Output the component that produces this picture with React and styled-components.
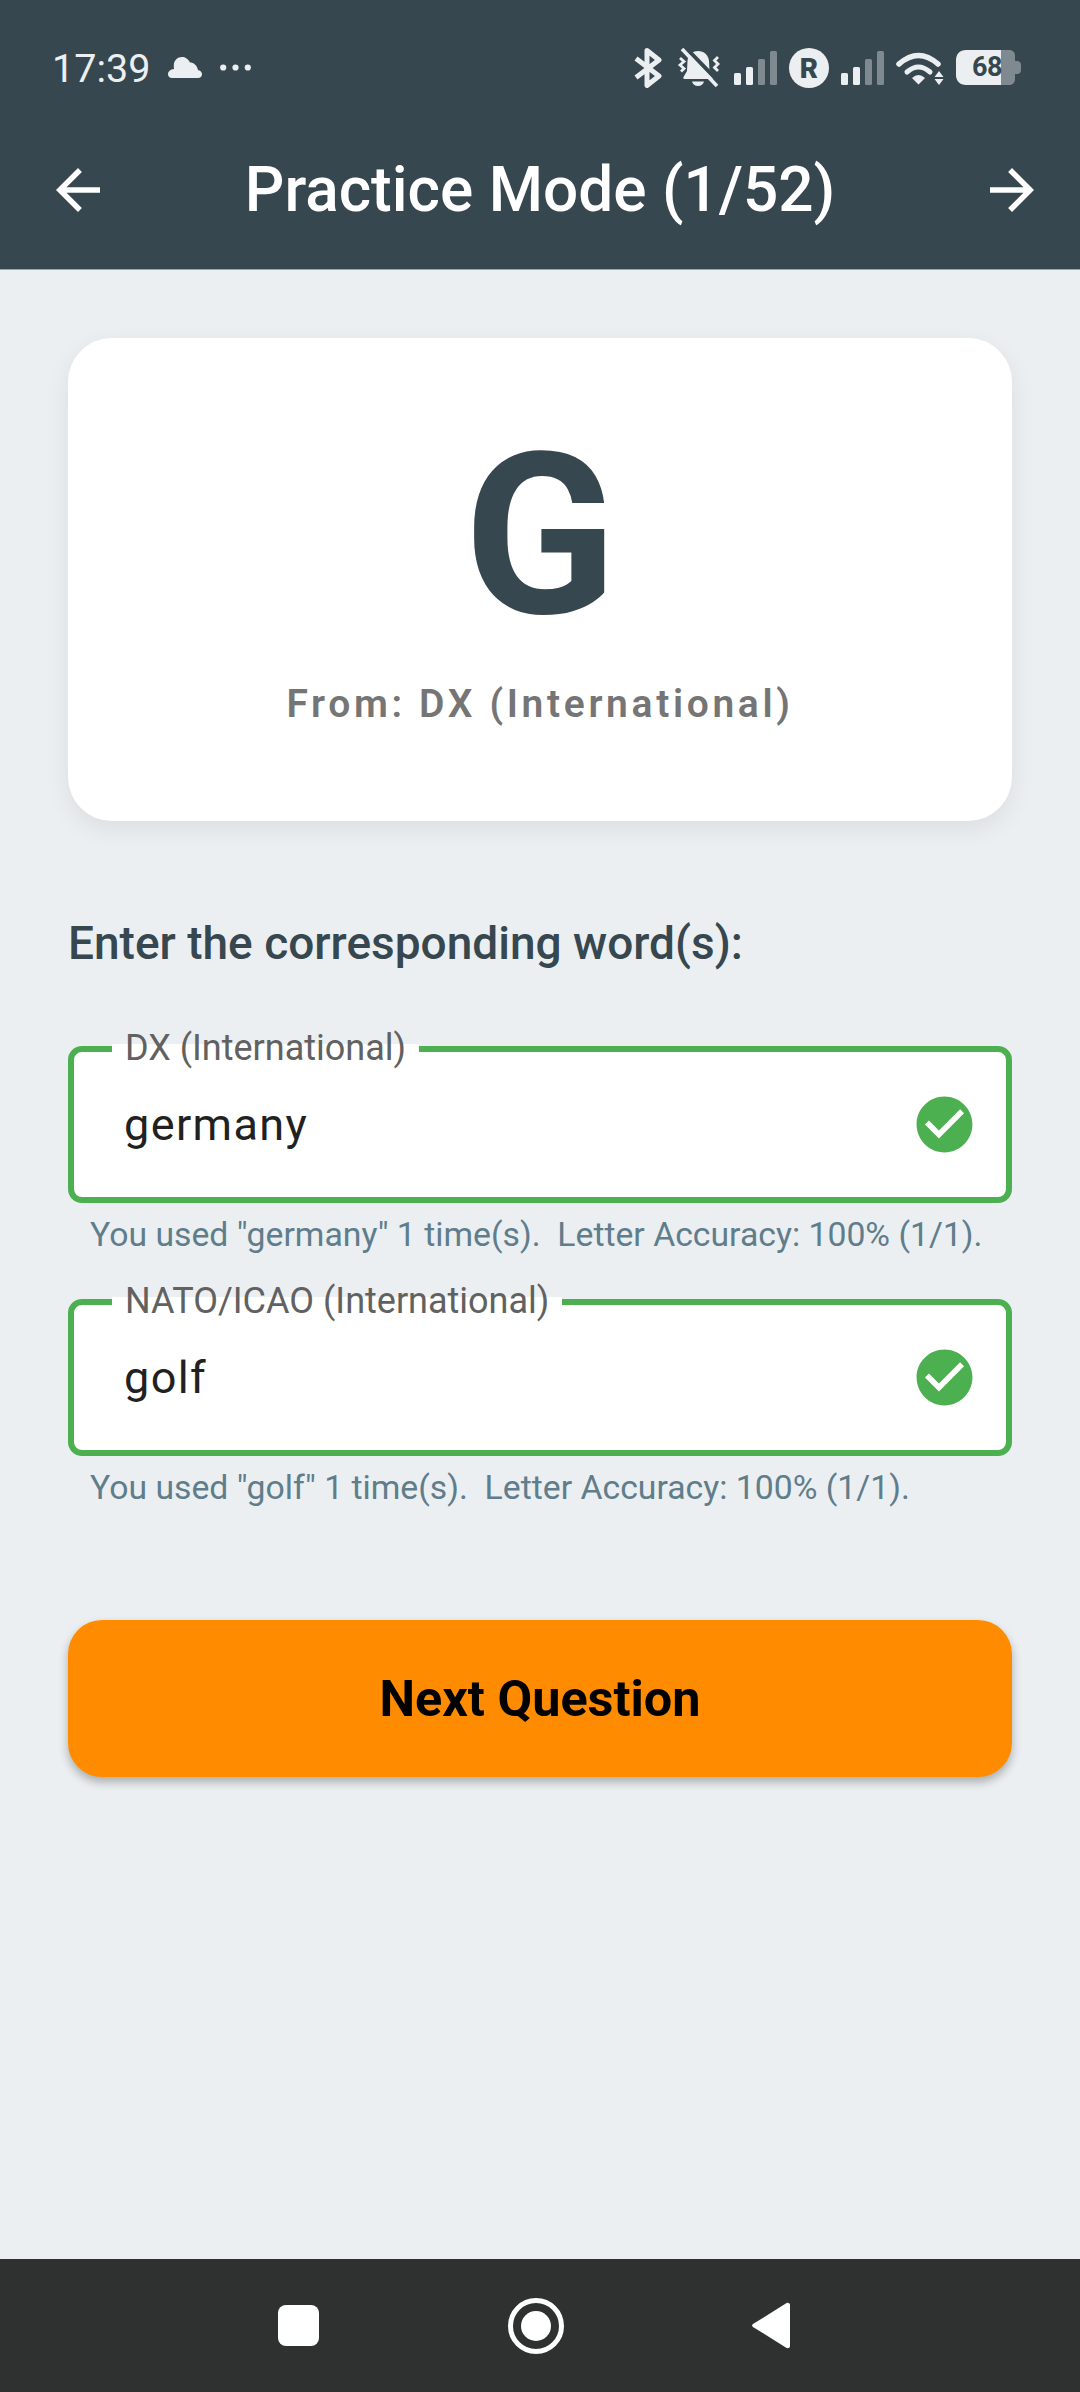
import React from 'react';
import styled, { createGlobalStyle } from 'styled-components';

const GlobalStyle = createGlobalStyle`
  html, body {
    margin: 0;
    padding: 0;
    background: #ebeff1;
  }
  * {
    box-sizing: border-box;
  }
`;

const Page = styled.div`
  width: 1080px;
  height: 2392px;
  display: flex;
  flex-direction: column;
  background: #ebeff1;
  font-family: Roboto, "Liberation Sans", sans-serif;
  overflow: hidden;
`;

const Header = styled.header`
  height: 270px;
  flex-shrink: 0;
  background: #37474f;
  border-bottom: 1px solid #9aa5aa;
`;

const StatusBar = styled.div`
  height: 135px;
  display: flex;
  align-items: center;
  justify-content: space-between;
  padding: 0 59px 0 52px;
  color: #eceff1;
`;

const StatusLeft = styled.div`
  display: flex;
  align-items: center;
  gap: 18px;
`;

const StatusTime = styled.span`
  margin-top: 3px;
  font-size: 39.5px;
  line-height: 44px;
`;

const StatusRight = styled.div`
  display: flex;
  align-items: center;
  gap: 12px;
`;

const StatusIcon = styled.svg`
  display: block;
  flex-shrink: 0;
`;

const Battery = styled.div`
  position: relative;
  width: 65px;
  height: 35px;
`;

const BatteryLevel = styled.span`
  position: absolute;
  left: 0;
  top: 0;
  width: 100%;
  height: 100%;
  text-align: center;
  padding-right: 3px;
  font-size: 27px;
  line-height: 35px;
  font-weight: 700;
  letter-spacing: -0.5px;
  color: #37474f;
`;

const AppBar = styled.div`
  height: 134px;
  display: flex;
  align-items: center;
  justify-content: space-between;
  padding: 0 35px 24px 45px;
`;

const Title = styled.h1`
  margin: 0 10px 0 0;
  color: #fff;
  font-size: 62.1px;
  line-height: 70px;
  font-weight: 500;
`;

const NavArrow = styled.svg`
  display: block;
  width: 66px;
  height: 66px;
  fill: #fff;
`;

const Main = styled.main`
  flex: 1;
  padding: 68px 68px 0;
  display: flex;
  flex-direction: column;
`;

const Card = styled.section`
  height: 483px;
  background: #fff;
  border-radius: 44px;
  box-shadow: 0 8px 24px rgba(0, 0, 0, 0.07);
  display: flex;
  flex-direction: column;
  align-items: center;
`;

const Letter = styled.div`
  margin-top: 84px;
  font-size: 224px;
  line-height: 230px;
  font-weight: 700;
  color: #37474f;
`;

const Source = styled.div`
  margin-top: 30px;
  font-size: 39px;
  line-height: 44px;
  font-weight: 600;
  letter-spacing: 3.66px;
  color: #757575;
`;

const Prompt = styled.h2`
  margin: 97px 0 0;
  font-size: 46px;
  line-height: 50px;
  font-weight: 500;
  color: #37474f;
`;

const Field = styled.div`
  position: relative;
  flex-shrink: 0;
  margin-top: ${(props) => props.$top}px;
  height: 157px;
  display: flex;
  align-items: center;
  justify-content: space-between;
  padding: 0 28px 0 50px;
  background: #fff;
  border: 6px solid #4caf50;
  border-radius: 14px;
`;

const FieldLabel = styled.label`
  position: absolute;
  left: 38px;
  top: -24px;
  padding: 0 13px;
  font-size: 36px;
  line-height: 40px;
  color: #616161;
  background: linear-gradient(#ebeff1 40%, #fff 40%);
`;

const FieldValue = styled.span`
  font-size: 45px;
  line-height: 54px;
  letter-spacing: 1.4px;
  color: #212121;
`;

const CheckIcon = styled.svg`
  display: block;
  width: 67px;
  height: 67px;
  fill: #4caf50;
`;

const Helper = styled.p`
  margin: 11.5px 0 0 22px;
  font-size: 33.75px;
  line-height: 40px;
  white-space: pre;
  color: #607d8b;
`;

const NextButton = styled.button`
  flex-shrink: 0;
  margin-top: 112.5px;
  height: 157px;
  border: none;
  border-radius: 34px;
  background: #ff8c00;
  box-shadow: 0 5px 10px rgba(0, 0, 0, 0.28);
  color: #000;
  font-family: inherit;
  font-size: 50.4px;
  font-weight: 700;
`;

const SystemNav = styled.nav`
  height: 133px;
  flex-shrink: 0;
  background: #2f3130;
  display: flex;
  align-items: center;
  padding-left: 278px;
`;

const RecentsKey = styled.div`
  width: 41px;
  height: 41px;
  background: #fff;
  border-radius: 8px;
`;

const HomeKey = styled.div`
  margin-left: 189px;
  width: 56px;
  height: 56px;
  border-radius: 50%;
  border: 5px solid #fff;
  display: flex;
  align-items: center;
  justify-content: center;
`;

const HomeDot = styled.div`
  width: 30px;
  height: 30px;
  border-radius: 50%;
  background: #fff;
`;

const BackKey = styled.svg`
  margin-left: 188px;
  display: block;
  width: 38px;
  height: 47px;
  fill: #fff;
`;

const ARROW_BACK = 'M20 11H7.83l5.59-5.59L12 4l-8 8 8 8 1.41-1.41L7.83 13H20v-2z';
const ARROW_FORWARD = 'M12 4l-1.41 1.41L16.17 11H4v2h12.17l-5.58 5.59L12 20l8-8z';
const CHECK_CIRCLE = 'M12 2C6.48 2 2 6.48 2 12s4.48 10 10 10 10-4.48 10-10S17.52 2 12 2zm-2 15l-5-5 1.41-1.41L10 14.17l7.59-7.59L19 8l-9 9z';

const Cloud = () => (
  <StatusIcon width="34" height="21" viewBox="0 0 34 21">
    <path fill="#eceff1" d="M4 21h26c2.400 0 4-1.700 4-3.800 0-2.200-1.600-3.900-3.900-4C29 8 25.400 5.500 22 5.500 20.500 2 17 0 14 0 9.500 0 6 3.500 5.800 8 5.700 9.500 5.800 10.500 6 12 2.500 12.200 0 14.500 0 17.200 0 19.500 1.700 21 4 21z" />
  </StatusIcon>
);

const Dots = () => (
  <StatusIcon width="31" height="7" viewBox="0 0 31 7">
    <circle cx="3.200" cy="3.500" r="3.100" fill="#eceff1" />
    <circle cx="15.500" cy="3.500" r="3.100" fill="#eceff1" />
    <circle cx="27.800" cy="3.500" r="3.100" fill="#eceff1" />
  </StatusIcon>
);

const Bluetooth = () => (
  <StatusIcon width="29" height="40" viewBox="0 0 29 40">
    <path fill="none" stroke="#eceff1" strokeWidth="5" strokeLinejoin="round" d="M2 10.500 25 28 13 37.500V2.500L25 12 2 29.500" />
  </StatusIcon>
);

const BellMuted = () => (
  <StatusIcon width="47" height="40" viewBox="0 0 47 40">
    <path fill="#eceff1" d="M23 3c6 0 10.500 4 11 10l.5 10 3.500 6c.5 1-.2 2-1.200 2H9.500c-1 0-1.500-1-1-2L12 23l.5-10C13 7 17 3 23 3zM17 33.500h12c-.5 2.700-3 4.500-6 4.500s-5.500-1.800-6-4.500z" />
    <path fill="none" stroke="#37474f" strokeWidth="4" d="M10 -1 46 36" />
    <path fill="none" stroke="#eceff1" strokeWidth="3.600" d="M7 1 42 38" />
    <path fill="none" stroke="#eceff1" strokeWidth="2.800" d="M5 10l4 3.500-4 3.500 4 3.500-3 3M43 9l-3.500 3.500L43 16l-3.500 3.500L43 23" />
  </StatusIcon>
);

const Signal = () => (
  <StatusIcon width="43" height="34" viewBox="0 0 43 34">
    <rect x="0" y="22" width="7" height="12" rx="1.500" fill="#eceff1" />
    <rect x="12" y="16" width="7" height="18" rx="1.500" fill="#eceff1" />
    <rect x="24" y="8" width="7" height="26" rx="1.500" fill="#7f8a90" />
    <rect x="36" y="0" width="7" height="34" rx="1.500" fill="#7f8a90" />
  </StatusIcon>
);

const RoamingBadge = () => (
  <StatusIcon width="40" height="40" viewBox="0 0 40 40">
    <circle cx="20" cy="20" r="20" fill="#eceff1" />
    <text x="20" y="30" textAnchor="middle" fontFamily="Roboto, sans-serif" fontSize="28" fontWeight="900" fill="#37474f">R</text>
  </StatusIcon>
);

const Wifi = () => (
  <StatusIcon width="48" height="34" viewBox="0 0 48 34">
    <path fill="none" stroke="#eceff1" strokeWidth="5.500" strokeLinecap="round" d="M3 13Q22.500 -4 42 13" />
    <path fill="none" stroke="#eceff1" strokeWidth="5" strokeLinecap="round" d="M11 21Q22.500 11 34 21" />
    <path fill="#eceff1" d="M16 27Q22.500 21 29 27L22.500 33.500zM43 20l4.500 6h-9zM38.500 28h9L43 34z" />
  </StatusIcon>
);

const BatteryIcon = () => (
  <Battery>
    <StatusIcon width="65" height="35" viewBox="0 0 65 35">
      <path fill="#7f8a90" d="M40 0h13c4 0 6 2.500 6 6v5h2c2.500 0 4 1.500 4 4v5c0 2.500-1.500 4-4 4h-2v5c0 3.500-2 6-6 6H40z" />
      <path fill="#eceff1" d="M10 0h35v35H10C4 35 0 31 0 25V10C0 4 4 0 10 0z" />
    </StatusIcon>
    <BatteryLevel>68</BatteryLevel>
  </Battery>
);

const AnswerField = ({ label, value, top }) => (
  <Field $top={top}>
    <FieldLabel>{label}</FieldLabel>
    <FieldValue>{value}</FieldValue>
    <CheckIcon viewBox="0 0 24 24">
      <path d={CHECK_CIRCLE} />
    </CheckIcon>
  </Field>
);

const App = () => {
  return (
    <Page>
      <GlobalStyle />
      <Header>
        <StatusBar>
          <StatusLeft>
            <StatusTime>17:39</StatusTime>
            <Cloud />
            <Dots />
          </StatusLeft>
          <StatusRight>
            <Bluetooth />
            <BellMuted />
            <Signal />
            <RoamingBadge />
            <Signal />
            <Wifi />
            <BatteryIcon />
          </StatusRight>
        </StatusBar>
        <AppBar>
          <NavArrow viewBox="0 0 24 24">
            <path d={ARROW_BACK} />
          </NavArrow>
          <Title>Practice Mode (1/52)</Title>
          <NavArrow viewBox="0 0 24 24">
            <path d={ARROW_FORWARD} />
          </NavArrow>
        </AppBar>
      </Header>

      <Main>
        <Card>
          <Letter>G</Letter>
          <Source>From: DX (International)</Source>
        </Card>

        <Prompt>Enter the corresponding word(s):</Prompt>

        <AnswerField label="DX (International)" value="germany" top={78} />
        <Helper>You used "germany" 1 time(s).  Letter Accuracy: 100% (1/1).</Helper>

        <AnswerField label="NATO/ICAO (International)" value="golf" top={44.5} />
        <Helper>You used "golf" 1 time(s).  Letter Accuracy: 100% (1/1).</Helper>

        <NextButton>Next Question</NextButton>
      </Main>

      <SystemNav>
        <RecentsKey />
        <HomeKey>
          <HomeDot />
        </HomeKey>
        <BackKey viewBox="0 0 40 48">
          <path d="M1 25.500a2 2 0 0 1 0-3L36 .5c1.700-1 4 0 4 2v43c0 2-2.300 3-4 2z" />
        </BackKey>
      </SystemNav>
    </Page>
  );
};

export default App;
